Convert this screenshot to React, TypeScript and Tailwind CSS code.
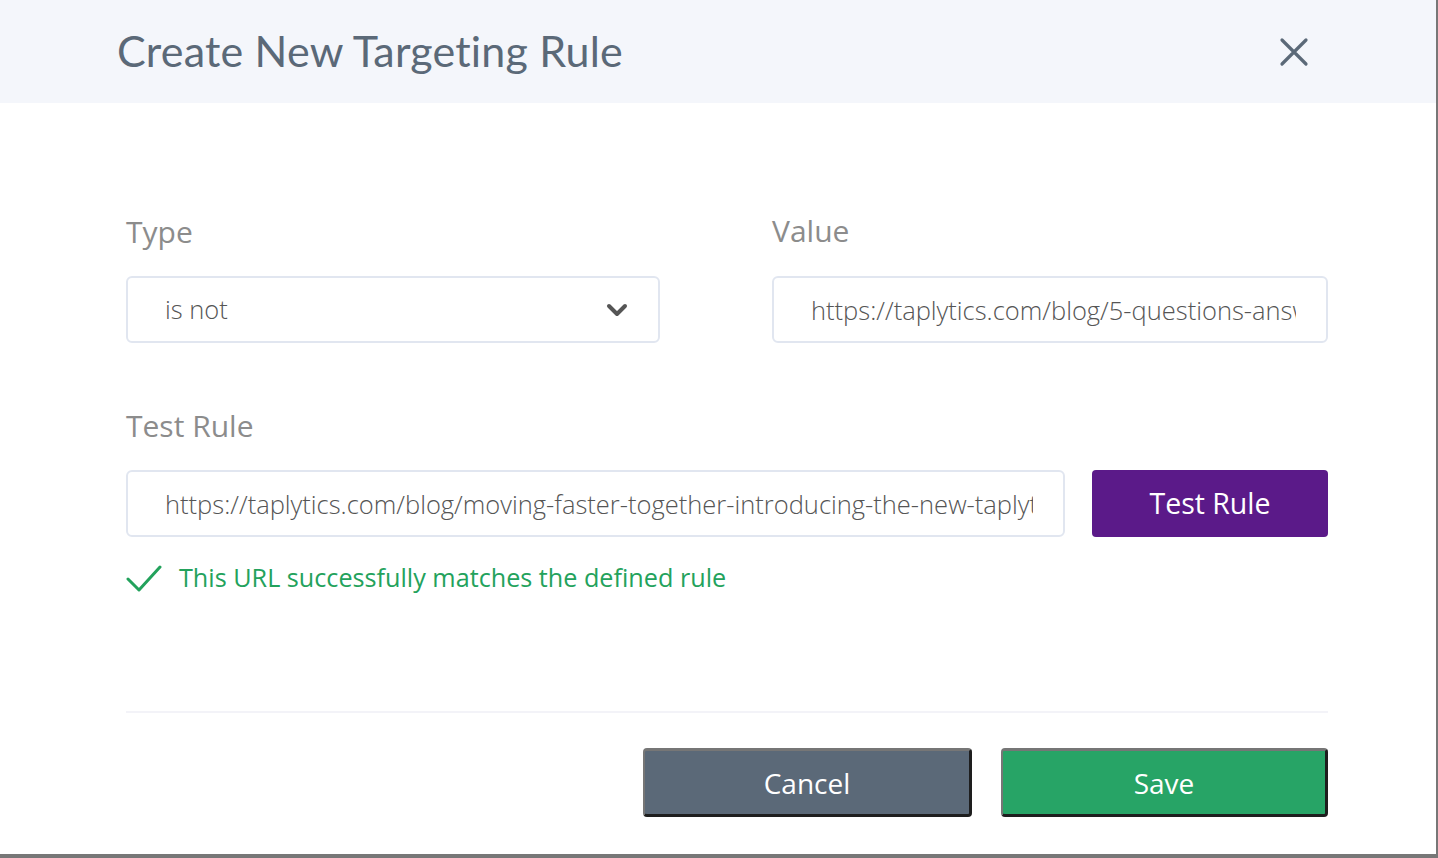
import React from "react";

const labelCls = "text-[30px] leading-[38px] text-[#8c8c8c]";
const boxCls = "h-[67px] rounded-[6px] border-2 border-[#e1e6f0] bg-white";
const inputCls =
  "w-full h-full min-w-0 bg-transparent outline-none pl-[37px] pr-[30px] text-[25.5px] font-light text-[#555]";

const ChevronDown = () => (
  <svg width="22" height="14" viewBox="0 0 22 14" fill="none">
    <path d="M3 3l8 8 8-8" stroke="#555" strokeWidth="4" strokeLinecap="round" strokeLinejoin="round" />
  </svg>
);

const CloseIcon = () => (
  <svg width="30" height="30" viewBox="0 0 30 30" fill="none">
    <path d="M3 3l24 24M27 3L3 27" stroke="#5b6978" strokeWidth="3.2" strokeLinecap="round" />
  </svg>
);

const CheckIcon = () => (
  <svg width="36" height="28" viewBox="0 0 36 28" fill="none">
    <path d="M2 15l11 11L34 3" stroke="#23a25c" strokeWidth="3" strokeLinecap="round" strokeLinejoin="round" />
  </svg>
);

export default function App() {
  return (
    <div
      className="w-[1438px] h-[858px] bg-white border-r-2 border-b-4 border-[#777] flex flex-col overflow-hidden"
      style={{ fontFamily: '"Open Sans", "Noto Sans", sans-serif' }}
    >
      <div className="h-[103px] shrink-0 bg-[#f4f6fb] flex items-center justify-between pl-[117px] pr-[127px]">
        <h1
          className="text-[43px] text-[#5b6978] tracking-[0.2px]"
          style={{ fontFamily: 'Lato, "Noto Sans", sans-serif' }}
        >
          Create New Targeting Rule
        </h1>
        <CloseIcon />
      </div>

      <div className="flex flex-col pl-[126px] pr-[108px] pt-[110px]">
        <div className="grid grid-cols-[534px_minmax(0,1fr)] gap-x-[112px]">
          <div className="flex flex-col">
            <div className={labelCls}>Type</div>
            <div className={`${boxCls} mt-[25px] flex items-center justify-between pl-[37px] pr-[30px] text-[25.5px] font-light text-[#555]`}>
              <span>is not</span>
              <ChevronDown />
            </div>
          </div>
          <div className="flex flex-col min-w-0">
            <div className={`${labelCls} -mt-[1px]`}>Value</div>
            <div className={`${boxCls} mt-[26px] overflow-hidden`}>
              <input
                readOnly
                className={inputCls}
                value="https://taplytics.com/blog/5-questions-answered-about-taplytics"
              />
            </div>
          </div>
        </div>

        <div className={`${labelCls} mt-[64px]`}>Test Rule</div>
        <div className="flex gap-[27px] mt-[25px]">
          <div className={`${boxCls} flex-1 min-w-0 overflow-hidden`}>
            <input
              readOnly
              className={inputCls}
              value="https://taplytics.com/blog/moving-faster-together-introducing-the-new-taplytics-platform"
            />
          </div>
          <button className="w-[236px] h-[67px] rounded-[4px] bg-[#5b1a89] text-white text-[28.5px]">
            Test Rule
          </button>
        </div>

        <div className="flex items-center gap-[17px] mt-[24px] h-[33px]">
          <CheckIcon />
          <span className="text-[25.2px] text-[#23a25c]">This URL successfully matches the defined rule</span>
        </div>

        <div className="h-[2px] bg-[#f3f3f8] mt-[117px]" />

        <div className="flex justify-end gap-[29px] mt-[35px]">
          <button className="w-[329px] h-[69px] rounded-[4px] bg-[#5b6978] text-white text-[28px] border-t-[3px] border-l-[2px] border-t-[#767676] border-l-[#767676] border-r-[3px] border-b-[3px] border-r-[#1e1e1e] border-b-[#1e1e1e]">
            Cancel
          </button>
          <button className="w-[327px] h-[69px] rounded-[4px] bg-[#27a466] text-white text-[28px] border-t-[3px] border-l-[2px] border-t-[#767676] border-l-[#767676] border-r-[3px] border-b-[3px] border-r-[#1e1e1e] border-b-[#1e1e1e]">
            Save
          </button>
        </div>
      </div>
    </div>
  );
}
